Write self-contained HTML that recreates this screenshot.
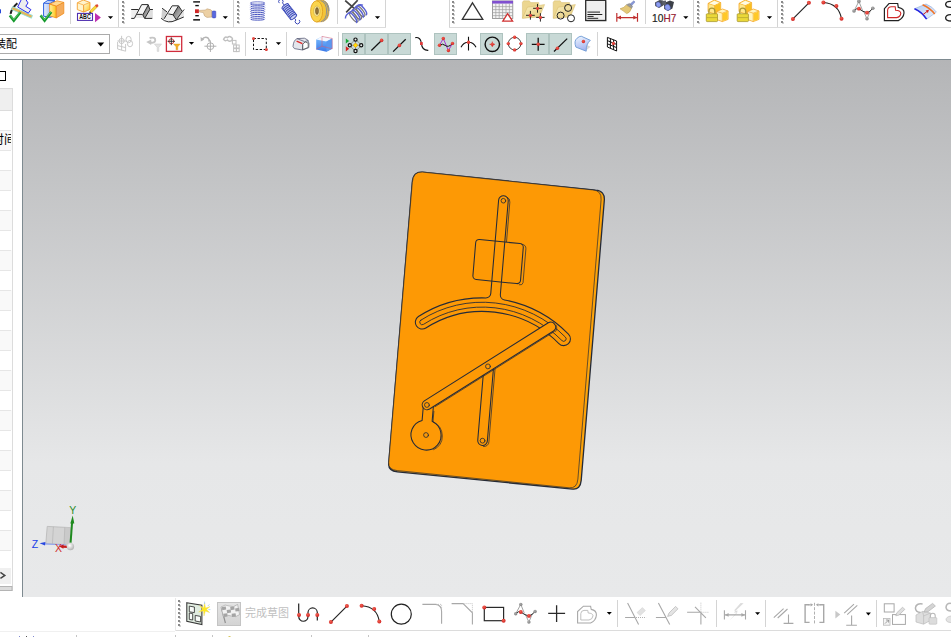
<!DOCTYPE html>
<html lang="zh-CN">
<head>
<meta charset="utf-8">
<title>NX</title>
<style>
html,body{margin:0;padding:0;background:#fff;overflow:hidden;}
body{width:951px;height:637px;position:relative;font-family:"Liberation Sans","Noto Sans CJK SC",sans-serif;}
.abs{position:absolute;}
#viewport{left:22px;top:59px;width:929px;height:538px;box-sizing:border-box;
  background:linear-gradient(to bottom,#b4b5b7 0%,#e6e7e8 75%,#e8e9ea 100%);
  border-top:1px solid #7e8a90;border-left:1px solid #7e8a90;}
#vpshade{left:22px;top:60px;width:929px;height:2px;background:linear-gradient(to bottom,#9aa2a6,rgba(176,178,180,0));}
.hl{height:1px;background:#dcdcdc;}
.vl{width:1px;background:#d4d4d4;}
.sel{background:#c8d9d6;border:1px solid #aec3bf;box-sizing:border-box;}
#combo{left:-2px;top:34px;width:112px;height:20px;box-sizing:border-box;border:1px solid #ababab;background:#fff;}
#combotxt{left:-5px;top:37px;font-size:11px;line-height:14px;color:#000;white-space:nowrap;}
.row{left:0;width:12px;height:19px;border-bottom:1px solid #e4e4e4;}
#tbl{left:0;top:88px;width:12px;height:502px;border-right:1px solid #dcdcdc;border-top:1px solid #dcdcdc;}
#done{left:245px;top:606px;font-size:11px;line-height:14px;color:#c0c0c0;white-space:nowrap;letter-spacing:0px;}
#svg{left:0;top:0;}
</style>
</head>
<body>
<!-- toolbar separators / lines -->
<div class="abs hl" style="left:0;top:27px;width:386px;"></div>
<div class="abs hl" style="left:449px;top:27px;width:502px;"></div>
<div class="abs vl" style="left:118px;top:0;height:27px;"></div>
<div class="abs vl" style="left:233px;top:0;height:27px;"></div>
<div class="abs vl" style="left:385px;top:0;height:27px;"></div>
<div class="abs vl" style="left:449px;top:0;height:27px;"></div>
<div class="abs vl" style="left:693px;top:0;height:27px;"></div>
<div class="abs vl" style="left:777px;top:0;height:27px;"></div>
<div class="abs vl" style="left:70px;top:0;height:24px;"></div>
<div class="abs vl" style="left:337px;top:0;height:24px;"></div>
<div class="abs vl" style="left:645px;top:0;height:24px;"></div>
<!-- row 2 separators -->
<div class="abs vl" style="left:139px;top:32px;height:24px;"></div>
<div class="abs vl" style="left:245px;top:32px;height:24px;"></div>
<div class="abs vl" style="left:286px;top:32px;height:24px;"></div>
<div class="abs vl" style="left:338px;top:32px;height:24px;"></div>
<div class="abs vl" style="left:597px;top:32px;height:24px;"></div>
<!-- selected buttons -->
<div class="abs sel" style="left:342px;top:33px;width:23px;height:22px;"></div>
<div class="abs sel" style="left:365px;top:33px;width:23px;height:22px;"></div>
<div class="abs sel" style="left:388px;top:33px;width:23px;height:22px;"></div>
<div class="abs sel" style="left:434px;top:33px;width:23px;height:22px;"></div>
<div class="abs sel" style="left:480px;top:33px;width:23px;height:22px;"></div>
<div class="abs sel" style="left:526px;top:33px;width:23px;height:22px;"></div>
<div class="abs sel" style="left:549px;top:33px;width:23px;height:22px;"></div>
<!-- combo -->
<div class="abs" id="combo"></div>
<div class="abs" id="combotxt">装配</div>
<!-- viewport -->
<div class="abs" style="left:0;top:59px;width:23px;height:1px;background:#7e8a90;"></div>
<div class="abs" id="viewport"></div>
<!-- left panel -->
<div class="abs" style="left:-2px;top:71px;width:6px;height:8px;border:1px solid #000;"></div>
<div class="abs" id="tbl"></div>
<div class="abs" style="left:0;top:89px;width:12px;height:21px;background:#efefef;border-bottom:1px solid #dcdcdc;"></div>
<div class="abs" style="z-index:3;left:-8px;top:133px;font-size:12px;line-height:14px;color:#000;white-space:nowrap;width:19px;overflow:hidden;">时间</div>

<!-- bottom toolbar -->
<div class="abs hl" style="left:175px;top:630px;width:776px;"></div>
<div class="abs hl" style="left:0;top:631px;width:175px;background:#f0f0f0;"></div>
<div class="abs vl" style="left:175px;top:598px;height:33px;background:#e8e8e8;"></div>
<div class="abs" style="left:217px;top:602px;width:24px;height:24px;box-sizing:border-box;background:linear-gradient(#e4e4e4,#d4d4d4);border:1px solid #c4c4c4;"></div>
<div class="abs" id="done">完成草图</div>
<div class="abs vl" style="left:617px;top:600px;height:27px;"></div>
<div class="abs vl" style="left:716px;top:600px;height:27px;"></div>
<div class="abs vl" style="left:765px;top:600px;height:27px;"></div>
<div class="abs vl" style="left:876px;top:600px;height:27px;"></div>
<svg id="svg" class="abs" width="951" height="637" viewBox="0 0 951 637">
<rect x="0" y="130" width="12" height="20" fill="#f9f9f9"/>
<rect x="0" y="170" width="12" height="20" fill="#f9f9f9"/>
<rect x="0" y="210" width="12" height="20" fill="#f9f9f9"/>
<rect x="0" y="250" width="12" height="20" fill="#f9f9f9"/>
<rect x="0" y="290" width="12" height="20" fill="#f9f9f9"/>
<rect x="0" y="330" width="12" height="20" fill="#f9f9f9"/>
<rect x="0" y="370" width="12" height="20" fill="#f9f9f9"/>
<rect x="0" y="410" width="12" height="20" fill="#f9f9f9"/>
<rect x="0" y="450" width="12" height="20" fill="#f9f9f9"/>
<rect x="0" y="490" width="12" height="20" fill="#f9f9f9"/>
<rect x="0" y="530" width="12" height="20" fill="#f9f9f9"/>
<rect x="0" y="130" width="11" height="1" fill="#e6e6e6"/>
<rect x="0" y="150" width="11" height="1" fill="#e6e6e6"/>
<rect x="0" y="170" width="11" height="1" fill="#e6e6e6"/>
<rect x="0" y="190" width="11" height="1" fill="#e6e6e6"/>
<rect x="0" y="210" width="11" height="1" fill="#e6e6e6"/>
<rect x="0" y="230" width="11" height="1" fill="#e6e6e6"/>
<rect x="0" y="250" width="11" height="1" fill="#e6e6e6"/>
<rect x="0" y="270" width="11" height="1" fill="#e6e6e6"/>
<rect x="0" y="290" width="11" height="1" fill="#e6e6e6"/>
<rect x="0" y="310" width="11" height="1" fill="#e6e6e6"/>
<rect x="0" y="330" width="11" height="1" fill="#e6e6e6"/>
<rect x="0" y="350" width="11" height="1" fill="#e6e6e6"/>
<rect x="0" y="370" width="11" height="1" fill="#e6e6e6"/>
<rect x="0" y="390" width="11" height="1" fill="#e6e6e6"/>
<rect x="0" y="410" width="11" height="1" fill="#e6e6e6"/>
<rect x="0" y="430" width="11" height="1" fill="#e6e6e6"/>
<rect x="0" y="450" width="11" height="1" fill="#e6e6e6"/>
<rect x="0" y="470" width="11" height="1" fill="#e6e6e6"/>
<rect x="0" y="490" width="11" height="1" fill="#e6e6e6"/>
<rect x="0" y="510" width="11" height="1" fill="#e6e6e6"/>
<rect x="0" y="530" width="11" height="1" fill="#e6e6e6"/>
<rect x="0" y="550" width="11" height="1" fill="#e6e6e6"/>
<rect x="0" y="568" width="11" height="16" fill="#f0f0f0"/>
<path d="M0.4 572.4 L4.8 575.4 L0.4 578.4" fill="none" stroke="#444" stroke-width="1.5"/>
<rect x="-1" y="586.5" width="13" height="4" fill="#dcdcdc" stroke="#b4b4b4" stroke-width="1"/>
<path d="M412.3 182.3 Q413.2 171.2 422.6 172.1 L595.6 190.2 Q605.1 190.9 604.3 200.5 L581.2 480.4 Q580.4 489.9 572.5 489.1 L397.4 471.8 Q388 470.9 388.7 463.1 Z" fill="#fea409" stroke="#252b38" stroke-width="1.3"/>
<path d="M412.3 182.3 Q413.2 171.2 422.6 172.1 L592.6 189.9 Q601.9 190.6 601.1 199.8 L577.9 479.1 Q577.1 488.6 569.2 487.8 L397.2 470.6 Q388 469.7 388.7 462.3 Z" fill="#fd9905" stroke="#252b38" stroke-width="0.7"/>
<g transform="matrix(1 0.1018 -0.084 1 413.2 171.2)" fill="none" stroke="#252b38" stroke-width="1.05" stroke-linecap="round" stroke-linejoin="round">
<path d="M17.25 143.61 A119 119 0 0 1 82.46 118.31 A5 5 0 0 0 87.10 113.32 L87.10 20.00 A4.8 4.8 0 0 1 96.70 20.00 L96.70 113.46 A5 5 0 0 0 101.27 118.44 A119 119 0 0 1 167.49 145.84 A6.75 6.75 0 0 1 158.81 156.18 A105.5 105.5 0 0 0 25.61 154.21 A6.75 6.75 0 0 1 17.25 143.61 Z"/>
<path d="M19.91 146.99 A114.7 114.7 0 0 1 164.73 149.13 A2.45 2.45 0 0 1 161.58 152.89 A109.8 109.8 0 0 0 22.95 150.83 A2.45 2.45 0 0 1 19.91 146.99 Z" stroke-width="0.85"/>
<circle cx="91.9" cy="20.2" r="2.3" stroke-width="0.8"/>
<path d="M95.3 16.2 A4.8 4.8 0 0 1 98.4 21 L98.4 60.5" stroke-width="0.7"/>
<rect x="67.9" y="61" width="47.6" height="40" rx="3.6" ry="3.6"/>
<path d="M113.5 61.3 Q118.2 61.6 118.2 65.5 L118.2 99.5 Q118 102.2 114.6 102" stroke-width="0.7"/>
<path d="M86.4 190 L86.4 260.2 A4.8 4.8 0 0 0 96 260.2 L96 186" />
<path d="M97.6 188 L97.6 260.6 A4.8 4.8 0 0 1 92.6 265.9" stroke-width="0.7"/>
<circle cx="91.2" cy="260.2" r="2.4" stroke-width="0.8"/>
<path d="M29.6 232 L29.6 246.19 A15 15 0 1 0 39.6 246.12 L39.6 232"/>
<path d="M40.5 236 L40.5 246.72 A15 15 0 0 1 43.5 274" stroke-width="0.7"/>
<circle cx="34.7" cy="260.3" r="2.4" stroke-width="0.8"/>
<path d="M30.17 226.60 L146.57 136.70 A4.8 4.8 0 0 1 152.43 144.30 L36.03 234.20 A4.8 4.8 0 0 1 30.17 226.60 Z" fill="#fd9905"/>
<path d="M154.50 138.37 A4.8 4.8 0 0 1 154.03 144.90" stroke-width="0.7"/>
<path d="M41.33 231.24 L152.98 145.01" stroke-width="0.7"/>
<circle cx="33.10" cy="230.40" r="2.4" stroke-width="0.8"/>
<circle cx="90.4" cy="186" r="2.4" stroke-width="0.8"/>
</g>
<defs>
<radialGradient id="gr" cx="0.4" cy="0.35" r="0.7"><stop offset="0" stop-color="#f06050"/><stop offset="1" stop-color="#d02020"/></radialGradient>
<radialGradient id="gg" cx="0.4" cy="0.35" r="0.7"><stop offset="0" stop-color="#aaaaaa"/><stop offset="1" stop-color="#808080"/></radialGradient>
<linearGradient id="gy" x1="0" y1="0" x2="1" y2="0"><stop offset="0" stop-color="#fff3a0"/><stop offset="1" stop-color="#ffc21a"/></linearGradient>
<linearGradient id="gyo" x1="0" y1="0" x2="1" y2="0"><stop offset="0" stop-color="#ffd24a"/><stop offset="1" stop-color="#f2a65a"/></linearGradient>
<linearGradient id="gbl" x1="0" y1="0" x2="1" y2="0"><stop offset="0" stop-color="#e8eefc"/><stop offset="1" stop-color="#88a8f0"/></linearGradient>
<linearGradient id="ggray" x1="0" y1="0" x2="1" y2="1"><stop offset="0" stop-color="#f4f4f4"/><stop offset="1" stop-color="#9a9a9a"/></linearGradient>
<linearGradient id="gfold" x1="0" y1="0" x2="1" y2="1"><stop offset="0" stop-color="#faf0c0"/><stop offset="1" stop-color="#e2c878"/></linearGradient>
<linearGradient id="gcube" x1="0" y1="0" x2="1" y2="1"><stop offset="0" stop-color="#fffbe0"/><stop offset="1" stop-color="#ffc820"/></linearGradient>
<linearGradient id="gsurf" x1="0" y1="0" x2="1" y2="1"><stop offset="0" stop-color="#b8d0f4"/><stop offset="1" stop-color="#e8f0fc"/></linearGradient>
<linearGradient id="gbcube" x1="0" y1="0" x2="0" y2="1"><stop offset="0" stop-color="#7cc0ff"/><stop offset="1" stop-color="#3a78e8"/></linearGradient>
</defs>
<rect x="0" y="9.3" width="1" height="4" fill="#2848d8"/>
<path d="M17.4 3.2 Q11.6 8 10.6 13.8" fill="none" stroke="#222" stroke-width="2"/>
<path d="M12.5 6.6 L32.5 15.4 L31.4 18.2 L11.4 9.4 Z" fill="#e6b45a" stroke="#86e6e6" stroke-width="0.8"/>
<path d="M17.7 7 L21.3 -0.5 L25.8 -0.5 L28 2.9 L25.8 6.3 L30.9 9.6 L28.3 13.2 Z" fill="#eeeeee" stroke="#2a2af0" stroke-width="1"/>
<path d="M9.8 15.4 L13.8 20.6 L20.4 12.2" fill="none" stroke="#169a2e" stroke-width="2.6" stroke-linejoin="miter"/>
<path d="M10.4 15.4 L13.8 19.6 L19.8 12.2" fill="none" stroke="#7fd88a" stroke-width="0.7"/>
<path d="M43.6 3.2 L47.8 0.4 L54.5 0.4 L54.5 16 L50 17.3 L43.6 16.2 Z" fill="url(#gbl)" stroke="#2b5fe0" stroke-width="1"/>
<path d="M43.6 3.2 L50 3.6 L54.5 0.8" fill="none" stroke="#2b5fe0" stroke-width="0.9"/>
<path d="M49.6 4 L56.3 6 L56.3 17.9 L49.6 15.8 Z" fill="url(#gy)" stroke="#f08c1c" stroke-width="0.8"/>
<path d="M56.3 6 L63.8 2.4 L63.8 13.4 L56.3 17.9 Z" fill="#f4ac5c" stroke="#f08c1c" stroke-width="0.8"/>
<path d="M49.6 4 L57 0.8 L63.8 2.4 L56.3 6 Z" fill="#ffd890" stroke="#f08c1c" stroke-width="0.8"/>
<path d="M40.6 15.4 L44.6 20.6 L51.3 12" fill="none" stroke="#169a2e" stroke-width="2.6"/>
<path d="M41.2 15.4 L44.6 19.6 L50.7 12" fill="none" stroke="#7fd88a" stroke-width="0.7"/>
<path d="M77.3 2.8 L83.2 0 L89.8 2.4 L89.8 9.4 L83.6 12 L77.3 9.6 Z" fill="#fff4cc" stroke="#f5a030" stroke-width="0.9"/>
<path d="M83.6 5 L89.8 2.4 L89.8 9.4 L83.6 12 Z" fill="url(#gcube)" stroke="#f5a030" stroke-width="0.7"/>
<path d="M77.3 2.8 L83.6 5 L83.6 12" fill="none" stroke="#f5a030" stroke-width="0.7"/>
<path d="M89.3 13.2 L90.2 10.6 L96 4.8 L97.8 6.6 L92 12.4 Z" fill="#f8d838" stroke="#c89a18" stroke-width="0.5"/>
<path d="M95 5.8 L96.4 4.4 Q97.6 3.8 98.2 5 L98.4 6 L96.8 7.6 Z" fill="#e04838"/>
<path d="M89.3 13.2 L89.9 11.2 L91.2 12.5 Z" fill="#222"/>
<rect x="77.5" y="13.4" width="15" height="7" fill="#fff" stroke="#5030b0" stroke-width="1.1"/>
<text x="85" y="19.4" font-family="Liberation Sans, sans-serif" font-size="6.6" font-weight="bold" text-anchor="middle" fill="#111" textLength="11.6" lengthAdjust="spacingAndGlyphs">ABC</text>
<path d="M95 12.9 L100.9 17.6 L95 22.2 Z" fill="#c030b0"/>
<path d="M107.9 16.2 h5.2 l-2.6 2.7 z" fill="#000"/>
<rect x="123" y="2" width="2" height="2" fill="#d2d2d2"/><rect x="122" y="1" width="2" height="2" fill="#8a8a8a"/>
<rect x="123" y="6" width="2" height="2" fill="#d2d2d2"/><rect x="122" y="5" width="2" height="2" fill="#8a8a8a"/>
<rect x="123" y="10" width="2" height="2" fill="#d2d2d2"/><rect x="122" y="9" width="2" height="2" fill="#8a8a8a"/>
<rect x="123" y="14" width="2" height="2" fill="#d2d2d2"/><rect x="122" y="13" width="2" height="2" fill="#8a8a8a"/>
<rect x="123" y="18" width="2" height="2" fill="#d2d2d2"/><rect x="122" y="17" width="2" height="2" fill="#8a8a8a"/>
<rect x="123" y="22" width="2" height="2" fill="#d2d2d2"/><rect x="122" y="21" width="2" height="2" fill="#8a8a8a"/>
<defs><linearGradient id="gdk" x1="0" y1="0" x2="1" y2="1"><stop offset="0" stop-color="#5a5a5a"/><stop offset="1" stop-color="#d8d8d8"/></linearGradient><linearGradient id="glt" x1="0" y1="0" x2="1" y2="0"><stop offset="0" stop-color="#f2f2f2"/><stop offset="1" stop-color="#dcdcdc"/></linearGradient></defs>
<rect x="131.2" y="10" width="21.6" height="8" fill="url(#glt)"/>
<path d="M134.6 18.4 L141.8 4.7 H148.2 L142.8 15 L137.1 14.4 Z" fill="#f6f6f6"/>
<path d="M142.8 14.8 L148.2 5 L149.8 9.5 L144.7 18.3 Z" fill="url(#gdk)"/>
<path d="M131.2 9.5 H138.6 M131.2 18.4 H134.3 L141.7 4.6 H148.2 L149.8 9.5 H152.9 M137.1 14.4 H142.6 M142.8 14.9 L148.2 5 M142.8 14.9 L144.7 18.4 H152.3 M144.7 18.4 L149.8 9.5" fill="none" stroke="#2a2a2a" stroke-width="1"/>
<path d="M162.1 8.4 L167.1 12 L164.4 18.6 L161.4 18.3 Z" fill="#cfcfcf"/>
<path d="M164.4 18.8 L168.4 13.9 L173.1 14.8 L176 19.8 Q170 23.6 164.4 18.8 Z" fill="#ececec"/>
<path d="M168.4 13.9 L173.1 6.2 H178.4 L173.1 14.8 Z" fill="#f4f4f4"/>
<path d="M173.1 14.8 L178.5 5.9 L182.3 11.5 L176.6 19.6 Z" fill="url(#gdk)"/>
<path d="M176.6 19.6 L182.3 11.6 L184.2 9.6 L183.6 17 Z" fill="#e4e4e4"/>
<path d="M162.1 8.2 L167.1 12 M164 18.9 L172.2 5.8 H178.5 L182.3 11.5 L184.2 9.5 M168.4 13.9 L173.1 14.8 L178.5 5.9 M173.1 14.8 L176.3 19.8 L182.3 11.5 M161.1 18.3 Q168 24.4 176 20.2 Q180 18.6 183.8 17" fill="none" stroke="#2a2a2a" stroke-width="1"/>
<rect x="193.2" y="1.2" width="6.8" height="1.4" fill="#111"/><rect x="195.3" y="4.9" width="3.5" height="1.4" fill="#111"/><rect x="195" y="9.3" width="3.9" height="3.8" fill="#d02828"/><rect x="195.3" y="15" width="3.5" height="1.4" fill="#111"/><rect x="193.2" y="19.1" width="6.8" height="1.5" fill="#111"/>
<path d="M199.4 10.4 L205.6 10 Q206.6 8.2 208 9 Q211.8 9.6 212 11.2 L212 17 L207 17.4 Q204 17 203.4 12.6 L199.4 12 Z" fill="#ecd0a4" stroke="#b8966a" stroke-width="0.5"/>
<rect x="212.2" y="11" width="3.6" height="6.9" rx="0.8" fill="#5868e0" stroke="#3840b0" stroke-width="0.5"/>
<path d="M222.7 16.2 h5.2 l-2.6 2.7 z" fill="#000"/>
<rect x="238" y="2" width="2" height="2" fill="#d2d2d2"/><rect x="237" y="1" width="2" height="2" fill="#8a8a8a"/>
<rect x="238" y="6" width="2" height="2" fill="#d2d2d2"/><rect x="237" y="5" width="2" height="2" fill="#8a8a8a"/>
<rect x="238" y="10" width="2" height="2" fill="#d2d2d2"/><rect x="237" y="9" width="2" height="2" fill="#8a8a8a"/>
<rect x="238" y="14" width="2" height="2" fill="#d2d2d2"/><rect x="237" y="13" width="2" height="2" fill="#8a8a8a"/>
<rect x="238" y="18" width="2" height="2" fill="#d2d2d2"/><rect x="237" y="17" width="2" height="2" fill="#8a8a8a"/>
<rect x="238" y="22" width="2" height="2" fill="#d2d2d2"/><rect x="237" y="21" width="2" height="2" fill="#8a8a8a"/>
<ellipse cx="257.6" cy="3" rx="7.2" ry="1.2" fill="none" stroke="#4a56c0" stroke-width="0.75"/>
<path d="M250.4 3.96 Q250.6 5.26 257.6 5.26 Q264.6 5.26 264.8 3.96" fill="none" stroke="#3f4cbc" stroke-width="0.95"/>
<path d="M250.4 5.82 Q250.6 7.12 257.6 7.12 Q264.6 7.12 264.8 5.82" fill="none" stroke="#3f4cbc" stroke-width="0.95"/>
<path d="M250.4 7.68 Q250.6 8.98 257.6 8.98 Q264.6 8.98 264.8 7.68" fill="none" stroke="#3f4cbc" stroke-width="0.95"/>
<path d="M250.4 9.54 Q250.6 10.84 257.6 10.84 Q264.6 10.84 264.8 9.54" fill="none" stroke="#3f4cbc" stroke-width="0.95"/>
<path d="M250.4 11.40 Q250.6 12.70 257.6 12.70 Q264.6 12.70 264.8 11.40" fill="none" stroke="#3f4cbc" stroke-width="0.95"/>
<path d="M250.4 13.26 Q250.6 14.56 257.6 14.56 Q264.6 14.56 264.8 13.26" fill="none" stroke="#3f4cbc" stroke-width="0.95"/>
<path d="M250.4 15.12 Q250.6 16.42 257.6 16.42 Q264.6 16.42 264.8 15.12" fill="none" stroke="#3f4cbc" stroke-width="0.95"/>
<path d="M250.4 16.98 Q250.6 18.28 257.6 18.28 Q264.6 18.28 264.8 16.98" fill="none" stroke="#3f4cbc" stroke-width="0.95"/>
<path d="M250.4 18.84 Q250.6 20.14 257.6 20.14 Q264.6 20.14 264.8 18.84" fill="none" stroke="#3f4cbc" stroke-width="0.95"/>
<g transform="translate(289.3 11.6) rotate(-38)">
<ellipse cx="0" cy="-6.6" rx="3.9" ry="1.5" fill="#c8d0f0" stroke="#3a48b8" stroke-width="1"/>
<ellipse cx="0" cy="-4.7" rx="3.9" ry="1.5" fill="#c8d0f0" stroke="#3a48b8" stroke-width="1"/>
<ellipse cx="0" cy="-2.8" rx="3.9" ry="1.5" fill="#c8d0f0" stroke="#3a48b8" stroke-width="1"/>
<ellipse cx="0" cy="-0.9" rx="3.9" ry="1.5" fill="#c8d0f0" stroke="#3a48b8" stroke-width="1"/>
<ellipse cx="0" cy="1.0" rx="3.9" ry="1.5" fill="#c8d0f0" stroke="#3a48b8" stroke-width="1"/>
<ellipse cx="0" cy="2.9" rx="3.9" ry="1.5" fill="#c8d0f0" stroke="#3a48b8" stroke-width="1"/>
<ellipse cx="0" cy="4.8" rx="3.9" ry="1.5" fill="#c8d0f0" stroke="#3a48b8" stroke-width="1"/>
<ellipse cx="0" cy="6.7" rx="3.9" ry="1.5" fill="#c8d0f0" stroke="#3a48b8" stroke-width="1"/>
<path d="M0 -8 L0 -11 A2.2 2.2 0 1 0 -2.6 -12.8 M0 8.6 L0 10.6 A2.3 2.3 0 1 0 2.6 12.6" fill="none" stroke="#3a48b8" stroke-width="0.9"/>
</g>
<path d="M316.6 0.6 L322.6 0 Q329 2 329 11 Q329 20 322.6 21.6 L316.6 22 Z" fill="#f4c436" stroke="#dc9c20" stroke-width="0.7"/>
<path d="M320.6 0.4 Q326.6 3 326.6 11 Q326.6 19.4 321 21.8 M322.8 0.4 Q328.6 4 328.2 11.6 Q327.8 18.6 323.2 21.4 M324.8 1.2 Q329.4 5 329 11" fill="none" stroke="#7484a8" stroke-width="0.8"/>
<ellipse cx="316.6" cy="11.4" rx="6" ry="10.6" fill="#fad44c" stroke="#e0a020" stroke-width="0.9"/>
<ellipse cx="316.8" cy="11.2" rx="3.3" ry="5.2" fill="#f4e498" stroke="#d4a838" stroke-width="0.6"/>
<ellipse cx="317" cy="11" rx="1.4" ry="3.4" fill="#9a7a38" stroke="#5a4420" stroke-width="0.6"/>
<g fill="none" stroke-width="1.25">
<ellipse cx="360.6" cy="11.4" rx="6.2" ry="2.3" transform="rotate(52 360.6 11.4)" stroke="#7a7a7a"/>
<ellipse cx="357.2" cy="14.2" rx="6.2" ry="2.3" transform="rotate(52 357.2 14.2)" stroke="#7a7a7a"/>
<ellipse cx="353.8" cy="16.8" rx="6.2" ry="2.3" transform="rotate(52 353.8 16.8)" stroke="#7a7a7a"/>
<path d="M-6.2 0 A6.2 2.5 0 0 1 6.2 0" transform="translate(362.2 10.2) rotate(52) " stroke="#5a62d4" stroke-width="1.5"/>
<path d="M-6.2 0 A6.2 2.5 0 0 1 6.2 0" transform="translate(358.9 12.8) rotate(52) " stroke="#5a62d4" stroke-width="1.5"/>
<path d="M-6.2 0 A6.2 2.5 0 0 1 6.2 0" transform="translate(355.6 15.6) rotate(52) " stroke="#5a62d4" stroke-width="1.5"/>
<path d="M-6.2 0 A6.2 2.5 0 0 1 6.2 0" transform="translate(352.3 18.0) rotate(52) " stroke="#5a62d4" stroke-width="1.5"/>
<path d="M345.4 18.4 Q345.4 14.6 349.6 12.6 Q353 10.4 356 6.6 Q359 4 363 5.2" stroke="#5a62d4" stroke-width="1.4"/>
</g>
<path d="M345.2 0.5 L353.9 8.2 M357.7 0.2 L346.2 12.3" fill="none" stroke="#444" stroke-width="1.7"/>
<path d="M374.9 16.2 h5.2 l-2.6 2.7 z" fill="#000"/>
<rect x="453" y="2" width="2" height="2" fill="#d2d2d2"/><rect x="452" y="1" width="2" height="2" fill="#8a8a8a"/>
<rect x="453" y="6" width="2" height="2" fill="#d2d2d2"/><rect x="452" y="5" width="2" height="2" fill="#8a8a8a"/>
<rect x="453" y="10" width="2" height="2" fill="#d2d2d2"/><rect x="452" y="9" width="2" height="2" fill="#8a8a8a"/>
<rect x="453" y="14" width="2" height="2" fill="#d2d2d2"/><rect x="452" y="13" width="2" height="2" fill="#8a8a8a"/>
<rect x="453" y="18" width="2" height="2" fill="#d2d2d2"/><rect x="452" y="17" width="2" height="2" fill="#8a8a8a"/>
<rect x="453" y="22" width="2" height="2" fill="#d2d2d2"/><rect x="452" y="21" width="2" height="2" fill="#8a8a8a"/>
<path d="M472.5 2.8 L482.8 19.4 L462.3 19.4 Z" fill="none" stroke="#333" stroke-width="1.3"/>
<rect x="492.4" y="1" width="20.4" height="17.4" fill="#f4f4f4" stroke="#888" stroke-width="0.8"/>
<rect x="492.2" y="0.8" width="20.8" height="2.8" fill="#8050d0"/>
<path d="M495.8 3.6 V18.4 M499.2 3.6 V18.4 M502.6 3.6 V18.4 M506.0 3.6 V18.4 M509.4 3.6 V18.4 M492.4 6.6 H512.8 M492.4 9.6 H512.8 M492.4 12.6 H512.8 M492.4 15.6 H512.8" fill="none" stroke="#a0a0a0" stroke-width="0.7"/>
<path d="M507.6 13.6 L512.6 21.2 L502.8 21.2 Z" fill="#fff" stroke="#d03030" stroke-width="1.3"/>
<path d="M522.4 2.2 L523.6 0.8 L529.4 0.8 L530.6 2.6 L538.8 2.6 L538.8 16.6 L522.4 18.2 Z" fill="#ecd690" stroke="#d8bc70" stroke-width="0.5"/>
<path d="M522.4 18.2 L527.4 7.2 L544.6 4.6 L539.4 16.8 Z" fill="url(#gfold)" stroke="#d4b868" stroke-width="0.5"/>
<path d="M533.1 8.3 H541.9 M537.5 3.9 V12.7" stroke="#111" stroke-width="0.9"/>
<circle cx="537.5" cy="8.3" r="1.6" fill="url(#gr)"/>
<path d="M526.0 15.3 H534.8 M530.4 10.9 V19.7" stroke="#111" stroke-width="0.9"/>
<circle cx="530.4" cy="15.3" r="1.6" fill="url(#gr)"/>
<path d="M536.2 17.4 H544.6 M540.4 13.2 V21.6" stroke="#111" stroke-width="0.9"/>
<circle cx="540.4" cy="17.4" r="1.6" fill="url(#gr)"/>
<path d="M553.2 2.2 L554.4 0.8 L560.2 0.8 L561.4 2.6 L569.6 2.6 L569.6 16.6 L553.2 18.2 Z" fill="#ecd690" stroke="#d8bc70" stroke-width="0.5"/>
<path d="M553.2 18.2 L558.2 7.2 L575.4 4.6 L570.2 16.8 Z" fill="url(#gfold)" stroke="#d4b868" stroke-width="0.5"/>
<circle cx="568.1" cy="7.9" r="3.5" fill="none" stroke="#222" stroke-width="1"/>
<circle cx="560.6" cy="15.6" r="3.5" fill="none" stroke="#222" stroke-width="1"/>
<circle cx="571" cy="18.3" r="3.5" fill="#fff" stroke="#222" stroke-width="1"/>
<rect x="586.6" y="1.4" width="20" height="20" fill="#c8c8c8"/>
<rect x="585.7" y="0.3" width="20" height="20.2" fill="#efefef" stroke="#2a2a2a" stroke-width="1.3"/>
<path d="M587.4 12.1 H600 M587.4 14.5 H602.3 M587.4 16.4 H593.6 M587.4 18.3 H598.2" stroke="#222" stroke-width="1"/>
<path d="M633.8 0.8 L635 2 L631.4 6 L629.6 4.4 Z" fill="#8898d8" stroke="#6070b0" stroke-width="0.4"/>
<path d="M626.4 4.8 L629.4 3.4 L632.6 6.4 L631.4 8.6 Z" fill="#9a9a9a" stroke="#6a6a6a" stroke-width="0.4"/>
<path d="M626.2 5 L631.4 8.4 Q630 13 626.6 13.6 Q623 10.6 620 8.8 Q624 8 626.2 5 Z" fill="#e4c878" stroke="#b89848" stroke-width="0.5"/>
<path d="M616.8 13 V21.8 M637.5 13 V21.8 M617.4 17.6 H637" stroke="#c03030" stroke-width="1.2" fill="none"/>
<path d="M617.2 17.6 L621 15.6 V19.6 Z M637.1 17.6 L633.3 15.6 V19.6 Z" fill="#c03030"/>
<path d="M655 2.6 L659.6 0 L663 0.4 L663.4 5.4 L659 8 L655.2 6 Z" fill="#4a4e58"/>
<path d="M664 3 L670 0.6 L674 2 L672.4 8.6 L668 11 L664.2 9 Z" fill="#3c4048"/>
<path d="M662 1 L666 0.4 L666 5 L662.6 5 Z" fill="#5a5e68"/>
<ellipse cx="658.4" cy="4.6" rx="2.2" ry="2.6" fill="#8c9cf0" stroke="#5060c0" stroke-width="0.4" transform="rotate(-30 658.4 4.6)"/>
<ellipse cx="667.6" cy="7.4" rx="2.6" ry="3" fill="#8c9cf0" stroke="#5060c0" stroke-width="0.4" transform="rotate(-30 667.6 7.4)"/>
<text x="652" y="21.6" font-family="Liberation Sans, sans-serif" font-size="11.6" fill="#1c1c1c" stroke="#1c1c1c" stroke-width="0.2" textLength="11.4" lengthAdjust="spacingAndGlyphs">10</text>
<text x="663.6" y="21.6" font-family="Liberation Sans, sans-serif" font-size="11.6" fill="#962030" stroke="#962030" stroke-width="0.2" textLength="12.8" lengthAdjust="spacingAndGlyphs">H7</text>
<path d="M683.2 16.2 h5.2 l-2.6 2.7 z" fill="#000"/>
<rect x="698" y="2" width="2" height="2" fill="#d2d2d2"/><rect x="697" y="1" width="2" height="2" fill="#8a8a8a"/>
<rect x="698" y="6" width="2" height="2" fill="#d2d2d2"/><rect x="697" y="5" width="2" height="2" fill="#8a8a8a"/>
<rect x="698" y="10" width="2" height="2" fill="#d2d2d2"/><rect x="697" y="9" width="2" height="2" fill="#8a8a8a"/>
<rect x="698" y="14" width="2" height="2" fill="#d2d2d2"/><rect x="697" y="13" width="2" height="2" fill="#8a8a8a"/>
<rect x="698" y="18" width="2" height="2" fill="#d2d2d2"/><rect x="697" y="17" width="2" height="2" fill="#8a8a8a"/>
<rect x="698" y="22" width="2" height="2" fill="#d2d2d2"/><rect x="697" y="21" width="2" height="2" fill="#8a8a8a"/>
<path d="M708.1 3.4 L714.3 0 L720.7 2.6 L720.7 12 L714.5 14 L708.1 11.6 Z" fill="#ffe88a" stroke="#f5a623" stroke-width="0.8"/>
<path d="M708.1 3.4 L714.5 5.4 L720.7 2.6 M714.5 5.4 V14" fill="none" stroke="#f5a623" stroke-width="0.7"/>
<path d="M709.3 3.6 L714.3 1 L719.3 2.8 L714.5 5 Z" fill="#fffbe6"/>
<path d="M714.9 5.6 L720.3 3.2 V11.6 L714.9 13.6 Z" fill="#f8c020"/>
<path d="M716.7 11.4 L722.5 9 L728.1 11 L728.1 19.4 L722.3 21.6 L716.7 19.6 Z" fill="#fff4c0" stroke="#f5a623" stroke-width="0.8"/>
<path d="M716.7 11.4 L722.3 13.2 L728.1 11 M722.3 13.2 V21.6" fill="none" stroke="#f5a623" stroke-width="0.7"/>
<path d="M722.7 13.6 L727.7 11.6 V19.2 L722.7 21 Z" fill="#ffc828"/>
<path d="M708.9 14 V11.2 A3 3 0 0 1 714.9 11.2 V14" fill="none" stroke="#a89838" stroke-width="1.3"/>
<rect x="706.3" y="13.8" width="11.2" height="7.8" rx="0.8" fill="#ead838" stroke="#a8982c" stroke-width="0.8"/>
<path d="M706.7 17.6 H717.1" stroke="#b8a830" stroke-width="0.8"/>
<path d="M739.0 3.4 L745.2 0 L751.6 2.6 L751.6 12 L745.4 14 L739.0 11.6 Z" fill="#ffe88a" stroke="#f5a623" stroke-width="0.8"/>
<path d="M739.0 3.4 L745.4 5.4 L751.6 2.6 M745.4 5.4 V14" fill="none" stroke="#f5a623" stroke-width="0.7"/>
<path d="M740.2 3.6 L745.2 1 L750.2 2.8 L745.4 5 Z" fill="#fffbe6"/>
<path d="M745.8 5.6 L751.2 3.2 V11.6 L745.8 13.6 Z" fill="#f8c020"/>
<path d="M747.6 11.4 L753.4 9 L759.0 11 L759.0 19.4 L753.2 21.6 L747.6 19.6 Z" fill="#fff4c0" stroke="#f5a623" stroke-width="0.8"/>
<path d="M747.6 11.4 L753.2 13.2 L759.0 11 M753.2 13.2 V21.6" fill="none" stroke="#f5a623" stroke-width="0.7"/>
<path d="M753.6 13.6 L758.6 11.6 V19.2 L753.6 21 Z" fill="#ffc828"/>
<path d="M739.8 14 V11.2 A3 3 0 0 1 745.8 11.2 V14" fill="none" stroke="#a89838" stroke-width="1.3"/>
<rect x="737.2" y="13.8" width="11.2" height="7.8" rx="0.8" fill="#ead838" stroke="#a8982c" stroke-width="0.8"/>
<path d="M737.6 17.6 H748.0" stroke="#b8a830" stroke-width="0.8"/>
<path d="M766.9 16.2 h5.2 l-2.6 2.7 z" fill="#000"/>
<rect x="782" y="2" width="2" height="2" fill="#d2d2d2"/><rect x="781" y="1" width="2" height="2" fill="#8a8a8a"/>
<rect x="782" y="6" width="2" height="2" fill="#d2d2d2"/><rect x="781" y="5" width="2" height="2" fill="#8a8a8a"/>
<rect x="782" y="10" width="2" height="2" fill="#d2d2d2"/><rect x="781" y="9" width="2" height="2" fill="#8a8a8a"/>
<rect x="782" y="14" width="2" height="2" fill="#d2d2d2"/><rect x="781" y="13" width="2" height="2" fill="#8a8a8a"/>
<rect x="782" y="18" width="2" height="2" fill="#d2d2d2"/><rect x="781" y="17" width="2" height="2" fill="#8a8a8a"/>
<rect x="782" y="22" width="2" height="2" fill="#d2d2d2"/><rect x="781" y="21" width="2" height="2" fill="#8a8a8a"/>
<path d="M792.9 18.9 L808.9 2.8" stroke="#222" stroke-width="1.1"/>
<circle cx="792.9" cy="18.9" r="2.0" fill="url(#gr)"/>
<circle cx="808.9" cy="2.8" r="2.0" fill="url(#gr)"/>
<path d="M823.4 2.5 Q838.6 3.4 841.5 18.7" fill="none" stroke="#222" stroke-width="1.1"/>
<circle cx="823.4" cy="2.5" r="2.0" fill="url(#gr)"/>
<circle cx="836.4" cy="6.1" r="2.0" fill="url(#gr)"/>
<circle cx="841.5" cy="18.7" r="2.0" fill="url(#gr)"/>
<path d="M858.9 1.4 L854 11 M858.9 1.4 L862.6 10.6 M867 18.7 L863.4 11 M867 18.7 L870.6 10.4" fill="none" stroke="#8a8a8a" stroke-width="0.8"/>
<path d="M854 11 Q857 7.6 858.9 8.7 Q863 12 867 12.7 Q870 12 872.8 8.3" fill="none" stroke="#222" stroke-width="1"/>
<circle cx="858.9" cy="1.4" r="1.8" fill="url(#gg)"/>
<circle cx="854.0" cy="11.0" r="1.8" fill="url(#gg)"/>
<circle cx="872.8" cy="8.3" r="1.8" fill="url(#gg)"/>
<circle cx="867.0" cy="18.7" r="1.8" fill="url(#gg)"/>
<circle cx="858.9" cy="8.7" r="1.9" fill="url(#gr)"/>
<circle cx="867.0" cy="12.7" r="1.9" fill="url(#gr)"/>
<path d="M884.4 20.6 V8.7 L889 3.5 H897.7 L898.3 7.4 Q904.4 8.6 904 13 Q903.6 18 898.3 20.6 Z" fill="none" stroke="#222" stroke-width="1.2"/>
<path d="M887.6 17.6 V10.2 Q888 7 891.4 6.8 H895.2 L895.6 10.2 Q900.6 10.4 900.8 13.4 Q900.4 17 896.6 17.6 Z" fill="none" stroke="#d02828" stroke-width="1.1"/>
<path d="M914.5 8.7 L926 4 Q932.6 6.6 936.4 12.1 L926.6 19.1 Q922 12 914.5 8.7 Z" fill="url(#gsurf)" stroke="#90a8d8" stroke-width="0.6"/>
<path d="M914.5 8.7 Q922 12 926.6 19.1" fill="none" stroke="#2424e0" stroke-width="1.6"/>
<path d="M922.6 4.8 Q930 8 934.7 14" fill="none" stroke="#f07428" stroke-width="1.5"/>
<path d="M923.1 14.5 L927.4 11.2" stroke="#d02020" stroke-width="1"/>
<path d="M929 9.8 L925.6 10.6 L927.8 13 Z" fill="#d02020"/>
<path d="M951 1.4 Q946 1 945.6 4.4 Q946 7.6 951 7.4 M951 14.6 Q946 14.4 945.6 17.8 Q946 21 951 21" fill="none" stroke="#222" stroke-width="1.3"/>
<path d="M97.2 42.6 H104.2 L100.7 46.4 Z" fill="#000"/>
<g fill="none" stroke="#c4c4c4" stroke-width="0.9">
<circle cx="121.6" cy="41" r="2.6"/><path d="M121.6 35.8 V46 M117.4 41 H126"/>
<path d="M117.6 42 L117.6 49 L125.6 51.2 L125.6 44 M121.6 46 V50.2 M117.6 45.6 L125.6 47.6"/>
<ellipse cx="128.6" cy="39.6" rx="2.6" ry="3.2"/><ellipse cx="130" cy="43.6" rx="2.6" ry="3.2"/>
</g>
<path d="M149.6 38 Q155.6 36.6 155.2 40.4 Q154.8 43.4 150.4 42.6" fill="none" stroke="#c6c6c6" stroke-width="2"/>
<path d="M146.2 42 L151.2 39.6 V45 Z" fill="#c6c6c6"/>
<path d="M154.4 44 H161.6 L158.8 47.4 V51.4 H157.2 V47.4 Z" fill="#e2e2e2" stroke="#d0d0d0" stroke-width="0.6"/>
<rect x="166.4" y="36.5" width="15.3" height="14.9" fill="#fff" stroke="#d02c3c" stroke-width="1.3"/>
<circle cx="171.3" cy="41.3" r="2.5" fill="none" stroke="#d02828" stroke-width="0.9"/>
<path d="M171.3 37.4 V45.2 M167.6 41.3 H175" stroke="#222" stroke-width="0.9"/>
<path d="M173.6 44 H180.2 L177.8 46.8 V49.8 H176 V46.8 Z" fill="#f2ae2c" stroke="#e09a18" stroke-width="0.4"/>
<path d="M188.9 42.1 h5.2 l-2.6 2.7 z" fill="#000"/>
<path d="M201.6 40 Q204.6 36 208 38 Q209.6 39.6 209 41.6" fill="none" stroke="#b4b4b4" stroke-width="1.5"/>
<path d="M200.6 37 L204.2 39.4 L200.8 41.6 Z" fill="#b4b4b4"/>
<circle cx="210.4" cy="46.2" r="3.4" fill="none" stroke="#a8a8a8" stroke-width="0.9"/><path d="M210.4 40.4 V52 M204.4 46.2 H216.4" stroke="#a8a8a8" stroke-width="0.9"/>
<g fill="none" stroke="#c0c0c0" stroke-width="1">
<path d="M223.6 39.4 Q225 36 227.4 37.6 Q229.6 35.4 231.4 37.4 Q233.4 38.6 231.6 40.6 Q229 42 227.4 40 Q225 41.6 223.6 39.4 Z" stroke-width="1.5"/>
<rect x="232.4" y="40.4" width="3.6" height="3.6"/><rect x="233.6" y="45" width="2.8" height="3"/><rect x="236.4" y="45" width="2.8" height="3"/><rect x="233.6" y="48.6" width="2.8" height="3"/><rect x="236.4" y="48.6" width="2.8" height="3"/>
</g>
<rect x="253.5" y="38.5" width="12.8" height="11" fill="none" stroke="#111" stroke-width="1" stroke-dasharray="2.4 1.6"/>
<circle cx="253.5" cy="38.5" r="1.5" fill="url(#gr)"/>
<circle cx="266.3" cy="49.5" r="1.5" fill="url(#gr)"/>
<path d="M275.9 42.3 h5.2 l-2.6 2.7 z" fill="#000"/>
<path d="M293 46.6 Q293.4 40.4 297 38.6 L304.4 38.2 Q308.6 39 309 43.4 L308.8 47.6 L302.6 50 L294.4 48.6 Z" fill="#e4e6ec" stroke="#5a5e78" stroke-width="0.8"/>
<path d="M302.6 50 Q302.4 44.6 305.4 41.4 L308.4 40.6 M302.6 50 V44 M297 38.6 L304.6 41.6" fill="none" stroke="#5a5e78" stroke-width="0.8"/>
<path d="M302.8 49.6 L302.8 44.4 Q303.6 42.6 305.4 42 L308.2 43.2 L308.2 47.4 Z" fill="#fff" stroke="#444" stroke-width="0.7"/>
<path d="M296.6 41.2 L302.4 43.6" stroke="#e02828" stroke-width="1.4"/>
<path d="M316.2 39.4 L322 36.4 L332.2 38.4 L332.2 48.8 L326.4 51.8 L316.2 49.4 Z" fill="url(#gbcube)"/>
<path d="M316.2 39.4 L322 36.4 L332.2 38.4 L326.4 41.6 Z" fill="#f4f8ff"/>
<path d="M326.4 41.6 L332.2 38.4 V48.8 L326.4 51.8 Z" fill="#5a98f0"/>
<path d="M322 36.4 V46.2 L332.2 48.8 M322 46.2 L316.2 49.4 M322 36.4 L332.2 38.4 V48.8" fill="none" stroke="#e85060" stroke-width="0.45"/>
<path d="M345.8 38.6 L349.2 41 L345.8 43.6 Z" fill="#18a838"/><path d="M345.8 46.2 L349.2 48.8 L345.8 51.4 Z" fill="#d82020"/>
<path d="M355.5 39.2 L361.6 45.3 L355.5 51.4 L349.4 45.3 Z M355.5 39.2 V51.4 M349.4 45.3 H361.6" fill="none" stroke="#666" stroke-width="0.6"/>
<circle cx="355.5" cy="39.6" r="1.6" fill="#e8f0ee" stroke="#111" stroke-width="1.2"/>
<circle cx="361.2" cy="45.3" r="1.6" fill="#e8f0ee" stroke="#111" stroke-width="1.2"/>
<circle cx="355.5" cy="51.0" r="1.6" fill="#e8f0ee" stroke="#111" stroke-width="1.2"/>
<circle cx="349.8" cy="45.3" r="1.6" fill="#e8f0ee" stroke="#111" stroke-width="1.2"/>
<path d="M355.5 43 L357.8 45.3 L355.5 47.6 L353.2 45.3 Z" fill="#ffe000" stroke="#f09000" stroke-width="0.7"/>
<path d="M371.3 50.5 L381.8 40.3" stroke="#111" stroke-width="1.2"/>
<circle cx="381.6" cy="40.4" r="1.8" fill="url(#gr)"/>
<path d="M393.1 51.6 L405.7 39.3" stroke="#111" stroke-width="1.2"/>
<circle cx="399.4" cy="45.4" r="1.8" fill="url(#gr)"/>
<path d="M415.3 37.6 Q420.8 37 421.4 43.4 Q422 50.6 428.3 50.4" fill="none" stroke="#111" stroke-width="1.1"/>
<rect x="420" y="42" width="2.8" height="3" rx="0.6" fill="#e03838"/>
<path d="M439.5 45.3 L443.3 38.5 L448.4 50.5 L452.5 43.4" fill="none" stroke="#a020d0" stroke-width="0.9"/>
<path d="M439.5 45.3 Q442.6 43 445.2 45.4 Q448.4 48 452.5 43.4" fill="none" stroke="#111" stroke-width="1"/>
<circle cx="443.3" cy="38.5" r="1.7" fill="url(#gr)"/>
<circle cx="439.5" cy="45.3" r="1.7" fill="url(#gr)"/>
<circle cx="452.5" cy="43.4" r="1.7" fill="url(#gr)"/>
<circle cx="448.4" cy="50.5" r="1.7" fill="url(#gr)"/>
<path d="M468.5 36.8 V50.6 M461 47.2 Q463.4 42.2 468.5 42.2 Q473.6 42.2 476 47.2" fill="none" stroke="#111" stroke-width="1.1"/>
<circle cx="468.5" cy="42.2" r="1.7" fill="url(#gr)"/>
<circle cx="492.3" cy="44.3" r="7.2" fill="none" stroke="#111" stroke-width="1.4"/>
<path d="M489.6 44.3 H495 M492.3 41.6 V47" stroke="#e02020" stroke-width="0.8"/>
<circle cx="492.3" cy="44.3" r="1.6" fill="url(#gr)"/>
<circle cx="514.6" cy="43.6" r="6.3" fill="none" stroke="#444" stroke-width="1"/>
<circle cx="514.6" cy="37.3" r="1.7" fill="url(#gr)"/>
<circle cx="520.9" cy="43.6" r="1.7" fill="url(#gr)"/>
<circle cx="514.6" cy="49.9" r="1.7" fill="url(#gr)"/>
<circle cx="508.3" cy="43.6" r="1.7" fill="url(#gr)"/>
<path d="M531.8 44.3 H544.6 M538.2 37.8 V50.8" stroke="#111" stroke-width="1.3"/>
<circle cx="538.2" cy="44.3" r="1.7" fill="url(#gr)"/>
<path d="M554 51.5 L567.2 38.6" stroke="#111" stroke-width="1.2"/>
<circle cx="557.4" cy="48.2" r="1.7" fill="url(#gr)"/>
<defs><linearGradient id="gsf2" x1="0" y1="0" x2="0.3" y2="1"><stop offset="0" stop-color="#f0f8ff"/><stop offset="1" stop-color="#a4b4f0"/></linearGradient></defs>
<path d="M586.8 45 L590.6 46.8 L586.6 50 Z" fill="#d6d6d6"/>
<path d="M581.2 36.2 L590.3 40.3 Q586 44 586.2 51.2 L575.9 47.1 Q573.6 41 577.1 38.2 Q579 36.4 581.2 36.2 Z" fill="url(#gsf2)" stroke="#6c98d4" stroke-width="0.9"/>
<circle cx="583.4" cy="41.5" r="1.7" fill="url(#gr)"/>
<path d="M607.4 37.4 L616.6 41 V51 L607.4 47 Z M610.4 38.6 V48.4 M613.6 39.8 V49.6 M607.4 40.6 L616.6 44.4 M607.4 43.8 L616.6 47.6" fill="none" stroke="#111" stroke-width="1"/>
<circle cx="613.4" cy="43.4" r="1.6" fill="url(#gr)"/>
<rect x="179" y="601" width="2" height="2" fill="#d2d2d2"/><rect x="178" y="600" width="2" height="2" fill="#8a8a8a"/>
<rect x="179" y="605" width="2" height="2" fill="#d2d2d2"/><rect x="178" y="604" width="2" height="2" fill="#8a8a8a"/>
<rect x="179" y="609" width="2" height="2" fill="#d2d2d2"/><rect x="178" y="608" width="2" height="2" fill="#8a8a8a"/>
<rect x="179" y="613" width="2" height="2" fill="#d2d2d2"/><rect x="178" y="612" width="2" height="2" fill="#8a8a8a"/>
<rect x="179" y="617" width="2" height="2" fill="#d2d2d2"/><rect x="178" y="616" width="2" height="2" fill="#8a8a8a"/>
<rect x="179" y="621" width="2" height="2" fill="#d2d2d2"/><rect x="178" y="620" width="2" height="2" fill="#8a8a8a"/>
<rect x="179" y="625" width="2" height="2" fill="#d2d2d2"/><rect x="178" y="624" width="2" height="2" fill="#8a8a8a"/>
<path d="M186.8 602.7 L201.9 605.3 V624.6 L186.8 621.3 Z" fill="#e0ece0" stroke="#3a3a3a" stroke-width="1.1"/>
<path d="M189.3 606.1 L194.4 607 V612.6 L189.3 611.8 Z M189.3 613 L192.7 613.6 V620 L189.3 619.4 Z M195.2 615.4 L200.6 616.4 V622 L195.2 621 Z" fill="#f8fbf8" stroke="#3a3a3a" stroke-width="0.9"/>
<path d="M204.6 603 L205.6 608 L210 606.6 L206.6 609.6 L209.6 612.6 L205.4 611.2 L204 616 L203.4 611 L198.6 612 L202.4 609.2 L199.6 605.4 L203.6 607.8 Z" fill="#ffe820" stroke="#e8d870" stroke-width="0.4"/>
<path d="M204.6 601.6 V604 M210.4 609.6 H208.4 M209.4 604.4 L207.8 606" stroke="#90c0f0" stroke-width="0.7"/>
<path d="M221.4 607.6 L225.4 623" stroke="#909090" stroke-width="1.2"/>
<path d="M221 607 Q225 603.6 229.4 606 Q233.6 608 237.6 604.4 L239.6 614.6 Q235.6 618 231.4 616 Q227.4 614 223.4 616.8 Z" fill="#f2f2f2" stroke="#a0a0a0" stroke-width="0.6"/>
<rect x="221.8" y="607.0" width="4" height="3.2" fill="#a4a4a4" transform="rotate(-8 221.8 607.0)"/><rect x="230.2" y="607.0" width="4" height="3.2" fill="#a4a4a4" transform="rotate(-8 230.2 607.0)"/><rect x="226.7" y="610.0" width="4" height="3.2" fill="#a4a4a4" transform="rotate(-8 226.7 610.0)"/><rect x="235.1" y="608.4" width="4" height="3.2" fill="#a4a4a4" transform="rotate(-8 235.1 608.4)"/><rect x="223.2" y="613.8" width="4" height="3.2" fill="#a4a4a4" transform="rotate(-8 223.2 613.8)"/><rect x="231.6" y="613.8" width="4" height="3.2" fill="#a4a4a4" transform="rotate(-8 231.6 613.8)"/>
<path d="M298.7 603.6 V616.6 A4.65 4.65 0 0 0 308 616.6 V612.6 A4.65 4.65 0 0 1 317.3 612.6 V620.6" fill="none" stroke="#222" stroke-width="1.2"/>
<circle cx="299.0" cy="614.9" r="2.0" fill="url(#gr)"/>
<circle cx="308.0" cy="614.9" r="2.0" fill="url(#gr)"/>
<circle cx="317.3" cy="614.9" r="2.0" fill="url(#gr)"/>
<path d="M330.9 622.1 L346.9 606.1" stroke="#222" stroke-width="1.1"/>
<circle cx="330.9" cy="622.1" r="2.0" fill="url(#gr)"/>
<circle cx="346.9" cy="606.1" r="2.0" fill="url(#gr)"/>
<path d="M361.6 605.8 Q377 606.6 379.3 621.6" fill="none" stroke="#222" stroke-width="1.1"/>
<circle cx="361.6" cy="605.8" r="2.0" fill="url(#gr)"/>
<circle cx="374.2" cy="609.1" r="2.0" fill="url(#gr)"/>
<circle cx="379.3" cy="621.6" r="2.0" fill="url(#gr)"/>
<circle cx="401.3" cy="614.2" r="10" fill="none" stroke="#222" stroke-width="1.2"/>
<path d="M422.4 604.4 H435.6 Q441.6 605 441.6 611.4 V623.8" fill="none" stroke="#a8a8a8" stroke-width="1.1"/>
<path d="M436 604.4 H441.6 V611" fill="none" stroke="#b8b8b8" stroke-width="0.8" stroke-dasharray="1 1"/>
<path d="M451.6 603.6 H463.1 L472.4 612.8 V624.6" fill="none" stroke="#a8a8a8" stroke-width="1.1"/>
<path d="M463.6 603.6 H472.4 V612.4" fill="none" stroke="#b8b8b8" stroke-width="0.8" stroke-dasharray="1 1"/>
<rect x="484.3" y="607.4" width="19.3" height="13.3" fill="none" stroke="#2a2a2a" stroke-width="1.2"/>
<circle cx="484.3" cy="607.4" r="2.0" fill="url(#gr)"/>
<circle cx="503.6" cy="620.7" r="2.0" fill="url(#gr)"/>
<path d="M520.8 604.4 L515.7 613.7 M520.8 604.4 L524.4 613.4 M528.9 622.1 L525.4 614.4 M528.9 622.1 L532.4 613.6" fill="none" stroke="#8a8a8a" stroke-width="0.8"/>
<path d="M515.7 613.7 Q518.6 610.6 520.8 612 Q525 615.4 528.9 615.9 Q532 615.2 535.1 611.5" fill="none" stroke="#222" stroke-width="1"/>
<circle cx="520.8" cy="604.4" r="1.7" fill="url(#gg)"/>
<circle cx="515.7" cy="613.7" r="1.7" fill="url(#gg)"/>
<circle cx="535.1" cy="611.5" r="1.7" fill="url(#gg)"/>
<circle cx="528.9" cy="622.1" r="1.7" fill="url(#gg)"/>
<circle cx="520.8" cy="612.0" r="1.9" fill="url(#gr)"/>
<circle cx="528.9" cy="615.9" r="1.9" fill="url(#gr)"/>
<path d="M548.2 613.3 H565.1 M556.6 605.3 V622.1" stroke="#2a2a2a" stroke-width="1.3"/>
<path d="M577.6 623 V611.6 L583.4 606.2 H590.6 L591.2 609.4 Q596.6 610.4 596.4 615 Q596 620.6 590.6 623 Z" fill="none" stroke="#a8a8a8" stroke-width="1.1"/>
<path d="M580.8 620 V613.6 Q581 610.6 584 610.4 H587.8 L588.2 613 Q592.8 613.2 593 615.8 Q592.6 619.4 589 620 Z" fill="none" stroke="#b8b8b8" stroke-width="0.9"/>
<path d="M606.8 612.0 h5.0 l-2.5 2.8 z" fill="#000"/>
<path d="M627.6 603.1 L638.6 624.6 M625.1 617.5 H635.2" fill="none" stroke="#a8a8a8" stroke-width="1.1"/>
<path d="M636 617.5 H646.1" stroke="#a8a8a8" stroke-width="0.9" stroke-dasharray="1 1"/>
<path d="M637 612.6 L642.4 607.6 L645.4 610.6 L640 615.6 Z" fill="#e2e2e2" stroke="#cfcfcf" stroke-width="0.5"/>
<path d="M658.4 603.1 L669.7 624.6 M655.9 617.5 H665.5" fill="none" stroke="#a8a8a8" stroke-width="1.1"/>
<path d="M667.6 616.4 L669 613 L675.6 606.4 L678 608.8 L671.4 615.4 Z" fill="#e4e4e4" stroke="#b4b4b4" stroke-width="0.7"/>
<path d="M687.1 612.3 H700.9 V624.6 M695 606.9 L705.9 617.9" fill="none" stroke="#a8a8a8" stroke-width="1.1"/>
<path d="M700.9 602.7 V612 M701.4 612.3 H708.4" stroke="#b8b8b8" stroke-width="0.8" stroke-dasharray="1 1"/>
<path d="M740.6 603 L734 610.6 L738 610.8 L729.6 620.4 L737.6 612.6 L733.8 612.4 L743.6 603.2 Z" fill="#dcdcdc"/>
<path d="M724.4 610.3 V619.6 M745.5 610.3 V619.6 M725 614.9 H745" fill="none" stroke="#a8a8a8" stroke-width="1.1"/>
<path d="M725 614.9 L728.6 613 V616.8 Z M745 614.9 L741.4 613 V616.8 Z" fill="#a8a8a8"/>
<path d="M755.1 612.3 h5.0 l-2.5 2.8 z" fill="#000"/>
<path d="M773.8 617.6 L783.6 608.6 M777.7 618 L787.5 609 M788.5 614.6 V623.4 M783.6 623.4 H793.4" fill="none" stroke="#a8a8a8" stroke-width="1.1"/>
<path d="M809.6 604.8 H805.1 V622.4 H809.6 M819.4 604.8 H823.7 V622.4 H819.4" fill="none" stroke="#a8a8a8" stroke-width="1.4"/>
<path d="M814.5 602.8 V624.4" stroke="#a8a8a8" stroke-width="0.9" stroke-dasharray="3 1.4"/>
<path d="M808.4 604.8 H812 M820.6 604.8 H817" stroke="#a8a8a8" stroke-width="0.9"/><path d="M813.2 604.8 L810.6 603.2 V606.4 Z M815.8 604.8 L818.4 603.2 V606.4 Z" fill="#a8a8a8"/>
<path d="M835.4 610.7 L840.3 614.6 L835.4 618.5 Z" fill="#c8c8c8"/>
<path d="M844.2 613.2 L854 604.2 M847.2 614.6 L857.3 605.4 M851.6 615.6 V625.3 M846.2 625.3 H856.9" fill="none" stroke="#a8a8a8" stroke-width="1.1"/>
<path d="M865.9 612.6 h5.0 l-2.5 2.8 z" fill="#000"/>
<rect x="884.3" y="603.8" width="9.8" height="8.2" fill="none" stroke="#a8a8a8" stroke-width="1"/>
<rect x="892.5" y="614.6" width="12.9" height="9.8" fill="#fff" stroke="#a8a8a8" stroke-width="1"/>
<path d="M895.8 615.8 L896.8 612.8 L902.6 607.2 L904.8 609.4 L899 615 Z" fill="#e0e0e0" stroke="#b4b4b4" stroke-width="0.7"/>
<rect x="883.4" y="618.6" width="6.6" height="6.6" fill="#f4f4f4" stroke="#b8b8b8" stroke-width="0.8"/><path d="M885 623.6 L888.4 620.2 M886 620 H888.6 V622.6" fill="none" stroke="#8a8a8a" stroke-width="0.8"/>
<path d="M922.6 604 Q916 603 915.4 608 Q915.6 612 920.6 612.6" fill="none" stroke="#b4b4b4" stroke-width="1.5"/>
<path d="M916 615 L922.6 611.4 L930.4 613 L930.4 620.4 L923.6 624.2 L916 622 Z" fill="#dedede" stroke="#bcbcbc" stroke-width="0.7"/>
<path d="M922.6 611.4 L923.6 616 L930.4 613 M923.6 616 V624" fill="none" stroke="#bcbcbc" stroke-width="0.7"/>
<path d="M924 612 L925.6 608.6 L932.6 603.4 L935.4 606 L928.2 611.6 Z" fill="#d4d4d4" stroke="#b0b0b0" stroke-width="0.7"/>
<path d="M930.4 618 V615.6 A2.4 2.4 0 0 1 935.2 615.6 V618" fill="none" stroke="#b8b8b8" stroke-width="1.1"/><rect x="929" y="617.6" width="7.8" height="6.6" rx="0.8" fill="#dcdcdc" stroke="#bcbcbc" stroke-width="0.6"/>
<path d="M951 603.4 Q946.4 603 946 607.4 Q946.4 611 951 611" fill="none" stroke="#b8b8b8" stroke-width="1.5"/><path d="M951 616 Q946 616.6 946 620 Q946.6 622.6 951 622.6" fill="#e4e4e4" stroke="#c4c4c4" stroke-width="0.7"/>
<path d="M76.5 635 V637 M175.5 635 V637 M212.5 635 V637 M311.5 635 V637 M368.5 635 V637" stroke="#c4c4c4" stroke-width="1"/>
<rect x="19" y="636" width="1" height="1" fill="#8088d0"/><rect x="26" y="636" width="1" height="1" fill="#555"/><rect x="33" y="636" width="1" height="1" fill="#8088d0"/><rect x="228.5" y="636" width="2" height="1" fill="#d8c860"/>
<path d="M47.2 526.4 L70.4 527.6 L69.4 544.8 L45.8 543.6 Z" fill="#d4d4d4" stroke="#b2b2b2" stroke-width="0.7"/>
<path d="M64.8 527.4 L70.4 527.6 L69.4 544.8 L64 544.6 Z" fill="#cacaca"/>
<path d="M53.4 526.8 L52.4 544 M64.8 527.4 L64 544.6" stroke="#b4b4b4" stroke-width="0.7"/>
<path d="M70.6 542.6 L72.2 521" stroke="#1f8a1f" stroke-width="2"/><path d="M72.7 515.4 L70.3 523.4 L74.3 523.6 Z" fill="#1f8a1f"/>
<path d="M66 545 L44 543.9" stroke="#90a4f0" stroke-width="1.2"/><path d="M39.6 543.2 L45.4 542 L45 545.6 Z" fill="#2848e0"/>
<path d="M68.4 546.9 L62.6 546.6" stroke="#c81c1c" stroke-width="2.4"/><path d="M58.8 546.3 L63.6 544.4 L63.4 548.8 Z" fill="#c81c1c"/>
<defs><radialGradient id="gsph" cx="0.4" cy="0.35" r="0.8"><stop offset="0" stop-color="#ffffff"/><stop offset="1" stop-color="#a0a0a0"/></radialGradient></defs><circle cx="70.4" cy="546.6" r="3.7" fill="url(#gsph)"/>
<text x="72.8" y="513.8" font-family="Liberation Sans, sans-serif" font-size="10.5" fill="#2a8c2a" text-anchor="middle">Y</text>
<text x="35" y="548" font-family="Liberation Sans, sans-serif" font-size="10.5" fill="#2040e8" text-anchor="middle">Z</text>
<text x="58.4" y="552.2" font-family="Liberation Sans, sans-serif" font-size="10.5" fill="#d03030" text-anchor="middle">X</text>
</svg>
</body>
</html>
